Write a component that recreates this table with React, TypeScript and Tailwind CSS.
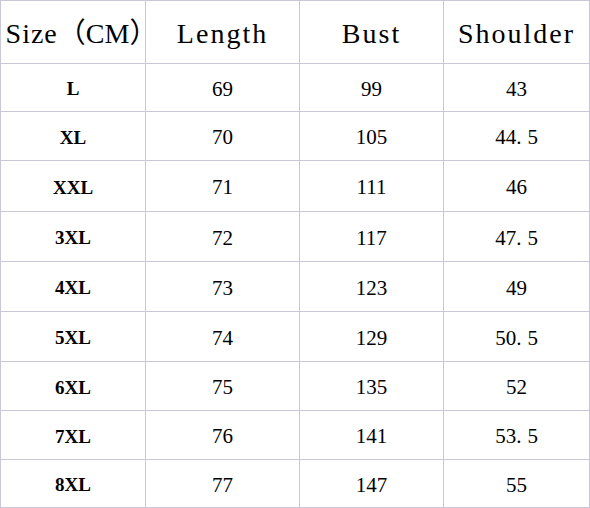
import React from 'react';

const ROWS = [
  { size: 'L', length: '69', bust: '99', shoulder: '43' },
  { size: 'XL', length: '70', bust: '105', shoulder: '44.5' },
  { size: 'XXL', length: '71', bust: '111', shoulder: '46' },
  { size: '3XL', length: '72', bust: '117', shoulder: '47.5' },
  { size: '4XL', length: '73', bust: '123', shoulder: '49' },
  { size: '5XL', length: '74', bust: '129', shoulder: '50.5' },
  { size: '6XL', length: '75', bust: '135', shoulder: '52' },
  { size: '7XL', length: '76', bust: '141', shoulder: '53.5' },
  { size: '8XL', length: '77', bust: '147', shoulder: '55' },
];

const font = "font-['Liberation_Serif','Noto_Sans_CJK_SC',serif]";

// decimals get a wider gap after the dot, like the half-width period in the source
const Num: React.FC<{ v: string }> = ({ v }) => {
  const [a, b] = v.split('.');
  if (b === undefined) return <>{a}</>;
  return (
    <>
      {a}
      <span className="mr-[6px]">.</span>
      {b}
    </>
  );
};

const Cell: React.FC<{ children: React.ReactNode; className?: string }> = ({ children, className = '' }) => (
  <div className={`bg-white flex items-center justify-center pt-[4px] text-black whitespace-nowrap ${font} ${className}`}>
    {children}
  </div>
);

const App: React.FC = () => {
  return (
    <div className="w-[590px] h-[508px] bg-white">
      <div className="grid grid-cols-[144px_153px_143px_145px] grid-rows-[62px_47px_48px_50px_49px_49px_49px_48px_48px_47px] gap-px p-px bg-[#c8c8d8]">
        {/* header */}
        <Cell className="text-[28px]">
          <span className="tracking-[1px]">Size</span>
          <span>（</span>
          <span>CM</span>
          <span className="-mr-[17px]">）</span>
        </Cell>
        <Cell className="text-[28px] tracking-[2px]">Length</Cell>
        <Cell className="text-[28px] tracking-[2px]">Bust</Cell>
        <Cell className="text-[28px] tracking-[2px]">Shoulder</Cell>

        {ROWS.map((r) => (
          <React.Fragment key={r.size}>
            <Cell className="text-[19px] font-bold">{r.size}</Cell>
            <Cell className="text-[21px]"><Num v={r.length} /></Cell>
            <Cell className="text-[21px]"><Num v={r.bust} /></Cell>
            <Cell className="text-[21px]"><Num v={r.shoulder} /></Cell>
          </React.Fragment>
        ))}
      </div>
    </div>
  );
};

export default App;
